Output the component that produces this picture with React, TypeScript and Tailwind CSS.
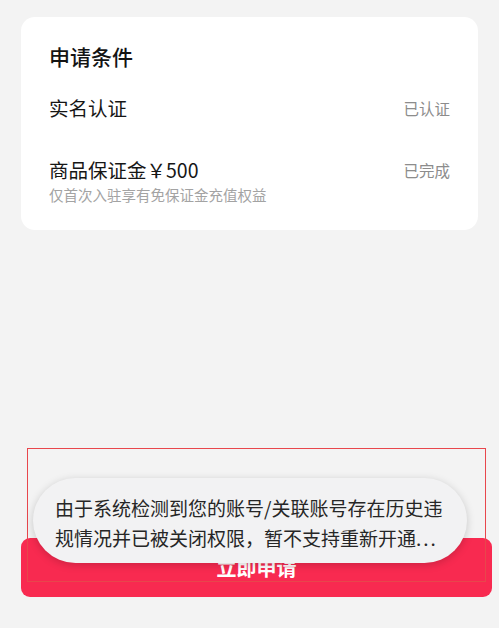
export default function App() {
  return (
    <div
      className="relative flex h-[628px] w-full flex-col overflow-hidden bg-[#f3f3f3] pb-[31px]"
      style={{ fontFamily: '"Noto Sans CJK SC", "Noto Sans", sans-serif' }}
    >
      {/* 申请条件卡片 */}
      <div className="mx-[21px] mt-[17px] w-[457px] rounded-[14px] bg-white pl-[28px] pr-[28px] pt-[25px] pb-[25px]">
        <div className="text-[21px] font-medium leading-[28px] text-[#141414]">申请条件</div>

        <div className="mt-[24px] flex items-center justify-between">
          <span className="text-[19.5px] leading-[28px] text-[#161616]">实名认证</span>
          <span className="text-[15.5px] leading-[22px] text-[#8c8c8c]">已认证</span>
        </div>

        <div className="mt-[34px] flex items-center justify-between">
          <span className="text-[19.5px] leading-[28px] text-[#161616]">商品保证金￥500</span>
          <span className="text-[15.5px] leading-[22px] text-[#8c8c8c]">已完成</span>
        </div>
        <div className="mt-[1px] text-[14.5px] leading-[20px] text-[#a3a3a3]">仅首次入驻享有免保证金充值权益</div>
      </div>

      <div className="flex-1" />

      <button
        type="button"
        className="mx-[21px] h-[59px] w-[471px] rounded-[9px] bg-[#f82a50] text-[20px] font-semibold text-white"
      >
        立即申请
      </button>

      {/* 标注框 */}
      <div className="pointer-events-none absolute left-[27px] top-[448px] h-[134px] w-[459px] border border-[#e8464c]" />

      {/* 提示 toast */}
      <div className="absolute left-[33px] top-[478px] flex h-[85px] w-[434px] flex-col justify-center rounded-full bg-[#f2f2f3] pl-[22px] pt-[4px] shadow-[0_2px_8px_rgba(0,0,0,0.18)]">
        <div className="whitespace-nowrap text-[19px] leading-[30px] text-[#262626]">由于系统检测到您的账号/关联账号存在历史违</div>
        <div className="whitespace-nowrap text-[19px] leading-[30px] text-[#262626]">
          规情况并已被关闭权限，暂不支持重新开通<span className="tracking-[2px]">...</span>
        </div>
      </div>
    </div>
  );
}
